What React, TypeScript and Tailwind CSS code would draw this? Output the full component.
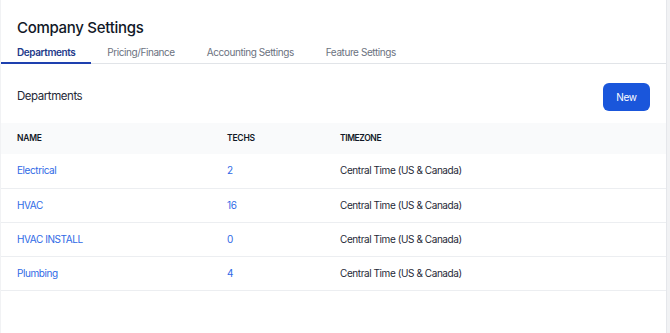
const tabs = ['Departments', 'Pricing/Finance', 'Accounting Settings', 'Feature Settings'];

const rows = [
  { name: 'Electrical', techs: '2', tz: 'Central Time (US & Canada)' },
  { name: 'HVAC', techs: '16', tz: 'Central Time (US & Canada)' },
  { name: 'HVAC INSTALL', techs: '0', tz: 'Central Time (US & Canada)' },
  { name: 'Plumbing', techs: '4', tz: 'Central Time (US & Canada)' },
];

export default function App() {
  return (
    <div
      className="w-[670px] h-[333px] bg-[#f1f2f4] pl-px pr-[3px] flex overflow-hidden"
      style={{ fontFamily: 'Inter, "Noto Sans", sans-serif' }}
    >
      <div className="flex-1 bg-white border-r border-[#e5e7eb] flex flex-col">
        {/* Title */}
        <h1 className="pl-4 pt-[17px] text-[15px] leading-[22px] font-medium tracking-[-0.3px] text-[#111827]">
          Company Settings
        </h1>

        {/* Tabs */}
        <div className="mt-[6px] flex border-b border-[#e1e4e8]">
          {tabs.map((t, i) => (
            <button
              key={t}
              className={`px-4 pb-[3px] pt-0 text-[10px] leading-[14px] tracking-[-0.42px] border-b-2 -mb-px ${
                i === 0
                  ? 'border-[#1e40af] text-[#1e3a8a] font-semibold'
                  : 'border-transparent text-[#6b7280]'
              }`}
            >
              {t}
            </button>
          ))}
        </div>

        {/* Section header */}
        <div className="flex items-center justify-between pl-4 pr-[16px] pt-[19px] pb-[12px]">
          <h2 className="text-[11.5px] tracking-[-0.45px] text-[#1f2937]">Departments</h2>
          <button className="w-[47px] h-[28px] rounded-md bg-[#1a56db] text-white text-[10px] tracking-[-0.3px]">
            New
          </button>
        </div>

        {/* Table */}
        <table className="w-full text-left border-collapse">
          <thead>
            <tr className="bg-[#f9fafb] h-[31px]">
              <th className="pl-4 w-[226px] text-[8.5px] font-semibold text-[#111827] tracking-tight">NAME</th>
              <th className="w-[113px] text-[8.5px] font-semibold text-[#111827] tracking-tight">TECHS</th>
              <th className="text-[8.5px] font-semibold text-[#111827] tracking-[-0.4px]">TIMEZONE</th>
            </tr>
          </thead>
          <tbody>
            {rows.map((r) => (
              <tr key={r.name} className="h-[34px] border-b border-[#eceef1] text-[10px] tracking-[-0.42px]">
                <td className="pl-4 text-[#2f6ae6]">{r.name}</td>
                <td className="text-[#2f6ae6]">{r.techs}</td>
                <td className="text-[#1f2937]">{r.tz}</td>
              </tr>
            ))}
          </tbody>
        </table>
      </div>
    </div>
  );
}
